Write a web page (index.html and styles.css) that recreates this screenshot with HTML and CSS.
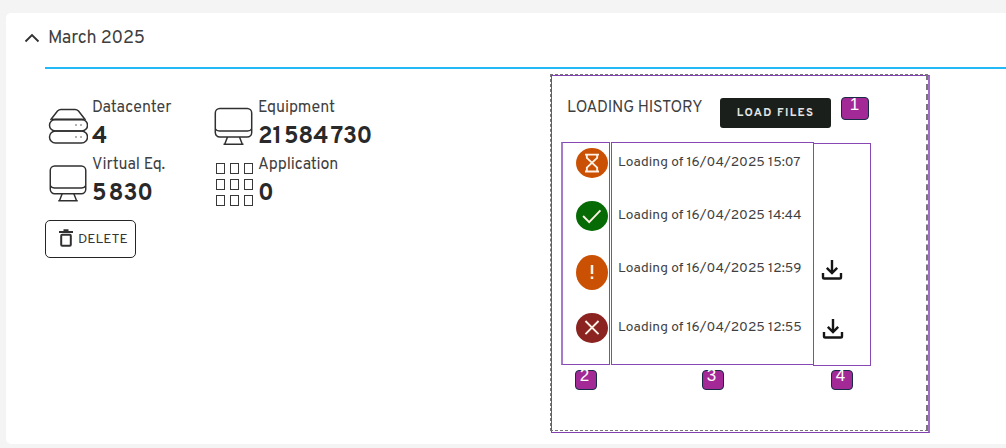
FILE: index.html
```html
<!DOCTYPE html>
<html lang="en">
<head>
<meta charset="utf-8">
<title>March 2025</title>
<link rel="stylesheet" href="styles.css">
</head>
<body>
<svg class="defs" width="0" height="0">
  <symbol id="monitor" viewBox="0 0 40 40">
    <rect x="1.300" y="1.500" width="36.400" height="28.500" rx="4.500"/>
    <path d="M1.500 22c.8 1.600 2 2 4 2h28c2 0 3.200-.4 4-2M13.500 30l-2.800 7.200M25.500 30l2.800 7.200M9.500 37.200h20"/>
  </symbol>
  <symbol id="download" viewBox="0 0 22 22">
    <path d="M11 1v13M5.800 8.800l5.200 5.200 5.200-5.200M2 14v4.200q0 1.300 1.300 1.300h15.400q1.300 0 1.300-1.300v-4.200"/>
  </symbol>
</svg>
<main class="card">
  <header class="head">
    <svg class="chevron" viewBox="0 0 16 10"><path d="M1.500 8.500L8 2l6.500 6.500"/></svg>
    <h1 class="title">March 2025</h1>
  </header>
  <div class="content">
    <section class="summary">
      <div class="stats">
        <div class="stat">
          <svg class="icon" viewBox="0 0 40 40">
            <path d="M2.500 13L9.500 4Q11 2.500 13 2.500h14Q29 2.500 30.500 4L37.500 13"/>
            <path class="strong" d="M4 12.500h32"/>
            <rect x="1.500" y="12.500" width="38" height="11.500" rx="5.700"/>
            <rect x="1.500" y="24" width="38" height="12" rx="6"/>
            <path d="M27.500 18h1M32.500 18h1M27.500 30h1M32.500 30h1"/>
          </svg>
          <div><div class="label">Datacenter</div><div class="value">4</div></div>
        </div>
        <div class="stat">
          <svg class="icon"><use href="#monitor"/></svg>
          <div><div class="label">Equipment</div><div class="value"><span>21</span><span>584</span><span>730</span></div></div>
        </div>
        <div class="stat">
          <svg class="icon virtual"><use href="#monitor"/></svg>
          <div><div class="label">Virtual Eq.</div><div class="value"><span>5</span><span>830</span></div></div>
        </div>
        <div class="stat">
          <div class="apps"><i></i><i></i><i></i><i></i><i></i><i></i><i></i><i></i><i></i></div>
          <div><div class="label">Application</div><div class="value">0</div></div>
        </div>
      </div>
      <button class="delete">
        <svg class="trash" viewBox="0 0 14 18"><path d="M0 3h14M4.500 1.200h5"/><rect x="2.200" y="5.800" width="9.600" height="11" rx="1"/></svg>
        <span>DELETE</span>
      </button>
    </section>
    <section class="history">
      <div class="bar">
        <h2 class="subtitle">LOADING HISTORY</h2>
        <button class="load">LOAD FILES</button>
        <span class="badge wide">1</span>
      </div>
      <div class="columns">
        <div class="col states">
          <svg class="state pending" viewBox="0 0 32 32"><path d="M8.500 7h15M8.500 25h15M10.500 7.500v3l11 10.500V25M21.500 7.500v3L10.500 21V25"/></svg>
          <svg class="state done" viewBox="0 0 32 32"><path d="M6.500 16l6.500 6.500L25 10"/></svg>
          <svg class="state warning" viewBox="0 0 32 32"><path d="M16 8.500v9M16 20v2.500"/></svg>
          <svg class="state failed" viewBox="0 0 32 32"><path d="M9 8.500l14 14M23 8.500l-14 14"/></svg>
        </div>
        <div class="col dates">
          <p>Loading of 16/04/2025 15:07</p>
          <p>Loading of 16/04/2025 14:44</p>
          <p>Loading of 16/04/2025 12:59</p>
          <p>Loading of 16/04/2025 12:55</p>
        </div>
        <div class="col files">
          <svg class="download"><use href="#download"/></svg>
          <svg class="download"><use href="#download"/></svg>
        </div>
      </div>
      <div class="badges">
        <span class="badge">2</span><span class="badge">3</span><span class="badge">4</span>
      </div>
    </section>
  </div>
</main>
</body>
</html>
```
FILE: styles.css
```css
* { box-sizing: border-box; }
body {
  margin: 0;
  height: 448px;
  padding: 13px 0 4px 6px;
  overflow: hidden;
  background: #f4f4f4;
  color: #3f3f3f;
  font-family: "Overpass", Roboto, sans-serif;
}
h1, h2, p { margin: 0; font-weight: 400; }
svg { display: block; flex: none; fill: none; stroke: #303030; }
.defs { position: absolute; }
button { font-family: inherit; padding: 0; }
.card { height: 431px; background: #fff; border-radius: 5px 0 0 5px; }
.head {
  display: flex;
  align-items: center;
  height: 56px;
  margin-left: 39px;
  padding-bottom: 6px;
  border-bottom: 2px solid #22baf6;
}
.chevron { width: 16px; height: 10px; margin: 2px 8px 0 -21px; stroke-width: 1.8; }
.title { padding-top: 4px; font-size: 18px; line-height: 24px; letter-spacing: -.15px; }
.content { display: flex; padding-left: 42px; }
.summary { width: 502px; padding-top: 27px; }
.stats { display: grid; grid-template-columns: 166px 200px; grid-auto-rows: 57px; }
.stat { display: flex; align-items: flex-start; gap: 4px; }
.icon { width: 40px; height: 40px; margin-top: 11px; stroke-width: 1.5; }
.virtual { padding-left: 1px; }
.icon .strong { stroke: #111; stroke-width: 1.7; }
.apps {
  display: grid;
  grid-template-columns: repeat(3, 9px);
  gap: 5px;
  width: 40px;
  margin-top: 8px;
  padding: 2px 0 0 1.500px;
}
.apps i { height: 11px; border: 1px solid #383838; }
.label { height: 22px; padding-top: 2px; font-size: 16px; line-height: 20px; letter-spacing: -.05px; white-space: nowrap; }
.value { display: flex; gap: 2px; padding-top: 4px; color: #292929; font-size: 24px; font-weight: 700; line-height: 30px; letter-spacing: -.2px; }
.delete {
  display: flex;
  align-items: center;
  gap: 5px;
  width: 91px;
  height: 38px;
  margin: 10px 0 0 -3px;
  padding-left: 13px;
  border: 1px solid #252525;
  border-radius: 5px;
  background: #fff;
  color: #353535;
  font-size: 13.800px;
}
.delete span { padding-top: 1px; }
.trash { width: 14px; height: 18px; stroke-width: 2; margin-bottom: 3px; }
.history {
  position: relative;
  width: 379px;
  height: 358px;
  margin: 6px 0 0 1px;
  border: 1px solid #8141ae;
  border-right: 2px solid #a16cc5;
}
.history::before {
  content: "";
  position: absolute;
  inset: -2px 0 1px -2px;
  border: 1px dashed #777;
  border-right-width: 2px;
  pointer-events: none;
}
.bar { display: flex; align-items: flex-start; height: 66px; padding: 22px 0 0 15px; }
.subtitle { width: 153px; font-size: 16px; line-height: 20px; letter-spacing: -.15px; white-space: nowrap; }
.load {
  width: 111px;
  height: 30px;
  border: 0;
  border-radius: 3px;
  background: #1a1f1c;
  color: #e4e4e4;
  font-size: 11.500px;
  font-weight: 700;
  letter-spacing: 1.350px;
}
.badge {
  flex: none;
  width: 22px;
  height: 20px;
  border: 1px solid #172b46;
  border-radius: 4px;
  background: #a32a96;
  color: #fff;
  font: 17px/10px "Liberation Sans", Arial, sans-serif;
  text-align: center;
  padding-right: 3px;
}
.wide { width: 28px; height: 23px; margin: -1px 0 0 10px; line-height: 14px; padding-right: 1px; }
.columns { display: flex; align-items: flex-start; padding-left: 9px; }
.col { height: 223px; border: 1px solid #8748b4; }
.states { width: 49px; padding: 5px 0 0 13px; border-left: 2px solid #a77bca; }
.state { width: 32px; height: 30px; border-radius: 50%; stroke: #fff1e6; stroke-width: 2; }
.pending { background: #ca5104; }
.done { margin-top: 23px; background: #066b05; }
.warning { height: 35px; margin-top: 24px; background: #ca5104; stroke-width: 2.500; }
.failed { margin-top: 23px; background: #8b2320; }
.dates { width: 203px; margin-left: 1px; padding: 11px 0 0 6px; font-size: 13.750px; line-height: 18px; white-space: nowrap; }
.dates p + p { margin-top: 35px; }
.dates p:last-child { margin-top: 41px; }
.files { width: 58px; margin: 1px 0 0 -1px; padding: 115px 0 0 7px; }
.download { width: 22px; height: 22px; stroke: #151515; stroke-width: 2.400; }
.download + .download { margin: 37px 0 0 1px; }
.badges { display: flex; padding: 4px 0 0 23px; }
.badges .badge { margin-right: 105px; }
.badges .badge + .badge { margin-right: 107px; }
```
